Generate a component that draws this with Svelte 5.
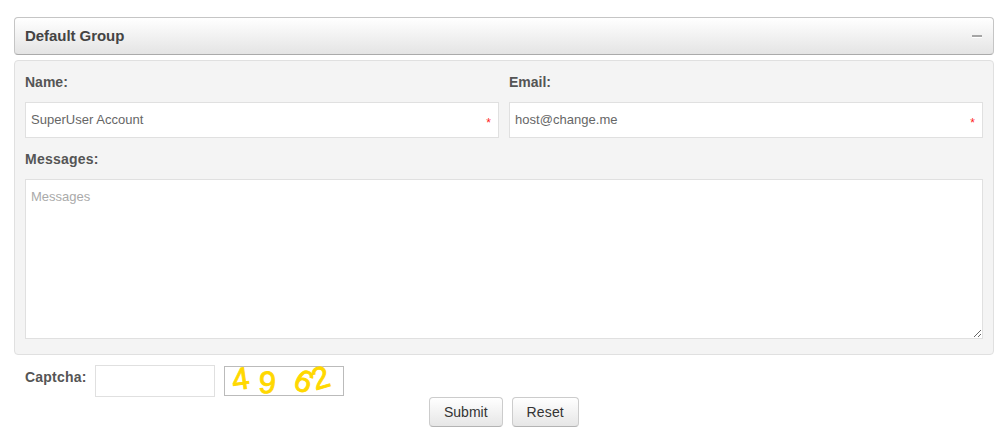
<script>
  let open = $state(true);
  let name = $state('SuperUser Account');
  let email = $state('host@change.me');
  let message = $state('');
  let captcha = $state('');

  function reset() {
    name = 'SuperUser Account';
    email = 'host@change.me';
    message = '';
    captcha = '';
  }
</script>

<form class="form" onsubmit={(e) => e.preventDefault()}>
  <button type="button" class="group" onclick={() => (open = !open)}>
    <span>Default Group</span>
    <i class="minus"></i>
  </button>

  {#if open}
    <section class="panel">
      <div class="row">
        <div class="field">
          <label for="name">Name:</label>
          <div class="box">
            <input id="name" bind:value={name} />
            <span class="required">*</span>
          </div>
        </div>
        <div class="field">
          <label for="email">Email:</label>
          <div class="box">
            <input id="email" bind:value={email} />
            <span class="required">*</span>
          </div>
        </div>
      </div>
      <div class="field messages">
        <label for="messages">Messages:</label>
        <textarea id="messages" placeholder="Messages" bind:value={message}></textarea>
      </div>
    </section>
  {/if}

  <div class="captcha">
    <label for="captcha">Captcha:</label>
    <input id="captcha" bind:value={captcha} />
    <svg class="code" viewBox="0 0 118 28" width="118" height="28">
      <text transform="translate(8.5 23.5) rotate(-8)">4</text>
      <text transform="translate(33 25.5) rotate(4)">9</text>
      <text transform="translate(66.5 20) rotate(26)">6</text>
      <text transform="translate(90.5 23.5) rotate(-17)">2</text>
    </svg>
  </div>

  <div class="actions">
    <button type="submit">Submit</button>
    <button type="button" class="reset" onclick={reset}>Reset</button>
  </div>
</form>

<style>
  :global(body) {
    background: #fff;
  }
  .form,
  .form input,
  .form textarea,
  .form button {
    box-sizing: border-box;
    font-family: 'Liberation Sans', Arial, sans-serif;
  }
  .form {
    padding: 17px 11px 0 14px;
    color: #555;
  }
  .group {
    display: flex;
    align-items: center;
    justify-content: space-between;
    width: 100%;
    height: 38px;
    padding: 0 11px 0 10px;
    border: 1px solid #c5c5c5;
    border-bottom-color: #aaa;
    border-radius: 4px;
    background: linear-gradient(#fff, #e4e4e4);
    color: #444;
    font-size: 15px;
    font-weight: bold;
  }
  .group span {
    padding-bottom: 2px;
    letter-spacing: -0.05px;
  }
  .minus {
    width: 10px;
    height: 2px;
    background: #a5a5a5;
    box-shadow: 0 1px #fff;
  }
  .panel {
    box-sizing: border-box;
    height: 295px;
    margin-top: 5px;
    padding: 12px 10px 0;
    border: 1px solid #e0e0e0;
    border-radius: 4px;
    background: #f4f4f4;
  }
  .row {
    display: flex;
    gap: 10px;
  }
  .field {
    display: flex;
    flex: 1;
    flex-direction: column;
    gap: 11px;
  }
  label {
    height: 18px;
    font-size: 14px;
    font-weight: bold;
    line-height: 18px;
  }
  .messages label,
  .captcha label {
    letter-spacing: 0.22px;
  }
  .box {
    position: relative;
  }
  .form input,
  textarea {
    display: block;
    width: 100%;
    margin: 0;
    border: 1px solid #e0e0e0;
    border-radius: 0;
    outline: none;
    background: #fff;
    color: #666;
    font-size: 13px;
  }
  .box input {
    height: 36px;
    padding: 0 24px 1px 5px;
    letter-spacing: 0.03px;
  }
  .required {
    position: absolute;
    top: 13px;
    right: 8px;
    color: #f22;
    font-size: 12px;
    line-height: 17px;
  }
  .messages {
    margin-top: 12px;
  }
  textarea {
    height: 160px;
    padding: 9px 5px;
    resize: both;
  }
  textarea::placeholder {
    color: #aaa;
    opacity: 1;
  }
  .captcha {
    display: flex;
    height: 32px;
    margin: 10px 0 0 11px;
  }
  .captcha label {
    width: 70px;
    margin-top: 3px;
  }
  .captcha input {
    width: 120px;
    height: 32px;
    padding: 0 5px;
  }
  .code {
    overflow: visible;
    margin: 1px 0 0 9px;
    border: 1px solid #bbb;
    background: #fff;
  }
  .code text {
    fill: #ffd800;
    stroke: #ffd800;
    stroke-width: 0.9px;
    font-family: 'Liberation Sans', Arial, sans-serif;
    font-size: 31px;
  }
  .actions {
    display: flex;
    gap: 9px;
    margin-left: 415px;
  }
  .actions button {
    height: 30px;
    padding: 0 14px;
    border: 1px solid #ccc;
    border-bottom-color: #b3b3b3;
    border-radius: 4px;
    background: linear-gradient(#fff, #e6e6e6);
    color: #333;
    font-size: 14px;
  }
  .actions .reset {
    width: 67px;
    letter-spacing: 0.15px;
  }
</style>
